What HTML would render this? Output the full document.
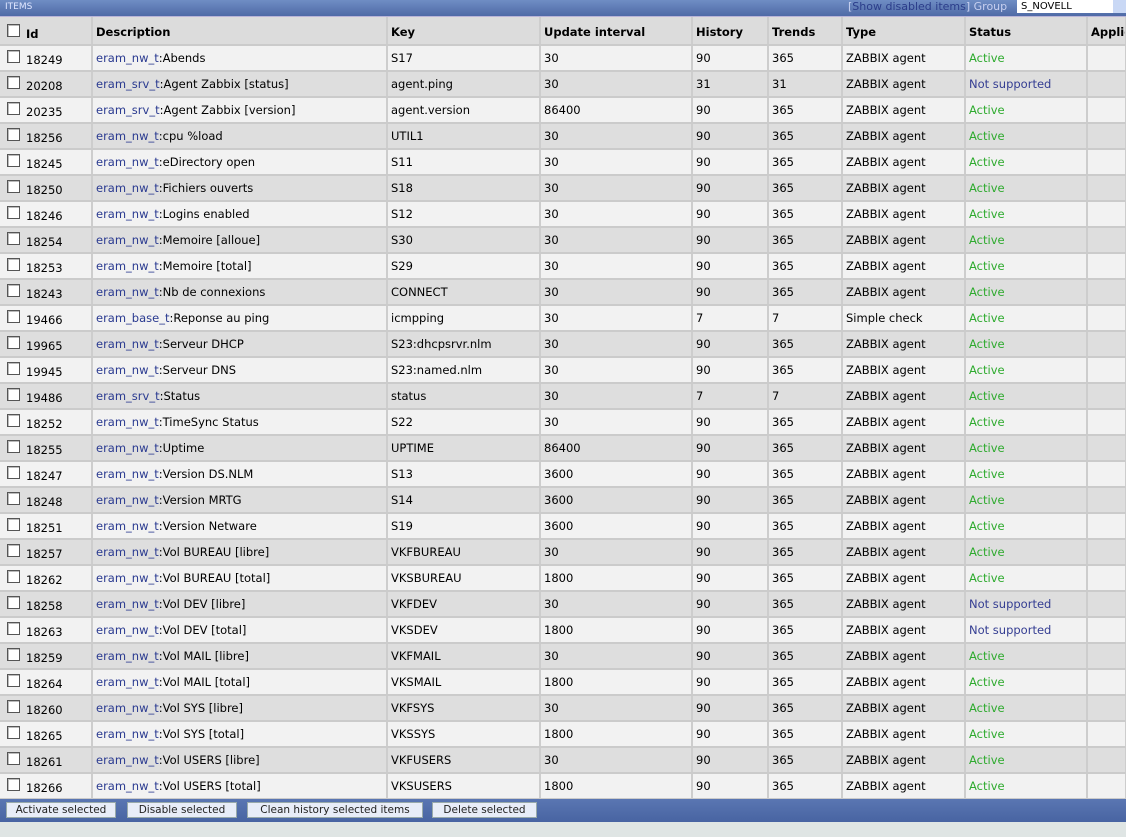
<!DOCTYPE html>
<html><head><meta charset="utf-8"><style>
body{margin:0;width:1126px;height:837px;background:#dfe5e4;font-family:"DejaVu Sans",Verdana,sans-serif;font-size:11.5px;color:#000;overflow:hidden;position:relative}
.top{position:absolute;left:0;top:0;width:1126px;height:16px;background:linear-gradient(#6f8dc4,#4f6aa6);border-bottom:1px solid #b9b4d8}
.top .t{position:absolute;left:5px;top:2px;color:#dfe6ff;font-size:9px}
.top .r{position:absolute;left:848px;top:0px;color:#c8d0f0;font-size:11px}
.top .r a{color:#2b3d8a}
.sel{position:absolute;left:1017px;top:0;width:109px;height:13px;background:#fff;font-size:10px;line-height:13px;text-indent:4px;color:#000}
.sel:after{content:"";position:absolute;right:0;top:0;width:13px;height:13px;background:#c9d8f5}
table{position:absolute;left:0;top:17px;border-collapse:collapse;table-layout:fixed;width:1126px}
td,th{border-right:2px solid #cdcdcd;border-bottom:2px solid #cbcbcb;height:20px;padding:0 0 4px 3px;white-space:nowrap;overflow:hidden;vertical-align:bottom;text-align:left;line-height:16px}
th{height:23px;background:#dcdcdc;font-weight:bold;padding-bottom:4px}
tr:nth-child(even) td{background:#f2f2f2}
tr:nth-child(odd) td{background:#dedede}
.cb{display:inline-block;width:11px;height:11px;border:1px solid #555;background:#fff;vertical-align:-1px;margin:0 6px 0 4px;box-shadow:inset 1px 1px 0 #bbb}
.id{position:relative;top:2px}
a{color:#2a3a90;text-decoration:none}
.g{color:#2daa2d}.n{color:#343d92}
.bar{position:absolute;left:0;top:799px;width:1126px;height:23px;background:linear-gradient(#5a76b2,#4864a2)}
.b{position:absolute;top:3px;height:14px;background:#e8edf8;border:1px solid #9aa;font-size:10.5px;line-height:14px;text-align:center;color:#222}
</style></head><body>
<div class="top"><span class="t">ITEMS</span><span class="r">[<a>Show disabled items</a>] Group</span><div class="sel">S_NOVELL</div></div>
<table>
<colgroup><col style="width:92px"><col style="width:295px"><col style="width:153px"><col style="width:152px"><col style="width:76px"><col style="width:74px"><col style="width:123px"><col style="width:122px"><col style="width:39px"></colgroup>
<tr><th><span class="cb"></span><span class="id">Id</span></th><th>Description</th><th>Key</th><th>Update interval</th><th>History</th><th>Trends</th><th>Type</th><th>Status</th><th>Applications</th></tr>
<tr><td><span class="cb"></span><span class="id">18249</span></td><td><a>eram_nw_t</a>:Abends</td><td>S17</td><td>30</td><td>90</td><td>365</td><td>ZABBIX agent</td><td class="g">Active</td><td></td></tr>
<tr><td><span class="cb"></span><span class="id">20208</span></td><td><a>eram_srv_t</a>:Agent Zabbix [status]</td><td>agent.ping</td><td>30</td><td>31</td><td>31</td><td>ZABBIX agent</td><td class="n">Not supported</td><td></td></tr>
<tr><td><span class="cb"></span><span class="id">20235</span></td><td><a>eram_srv_t</a>:Agent Zabbix [version]</td><td>agent.version</td><td>86400</td><td>90</td><td>365</td><td>ZABBIX agent</td><td class="g">Active</td><td></td></tr>
<tr><td><span class="cb"></span><span class="id">18256</span></td><td><a>eram_nw_t</a>:cpu %load</td><td>UTIL1</td><td>30</td><td>90</td><td>365</td><td>ZABBIX agent</td><td class="g">Active</td><td></td></tr>
<tr><td><span class="cb"></span><span class="id">18245</span></td><td><a>eram_nw_t</a>:eDirectory open</td><td>S11</td><td>30</td><td>90</td><td>365</td><td>ZABBIX agent</td><td class="g">Active</td><td></td></tr>
<tr><td><span class="cb"></span><span class="id">18250</span></td><td><a>eram_nw_t</a>:Fichiers ouverts</td><td>S18</td><td>30</td><td>90</td><td>365</td><td>ZABBIX agent</td><td class="g">Active</td><td></td></tr>
<tr><td><span class="cb"></span><span class="id">18246</span></td><td><a>eram_nw_t</a>:Logins enabled</td><td>S12</td><td>30</td><td>90</td><td>365</td><td>ZABBIX agent</td><td class="g">Active</td><td></td></tr>
<tr><td><span class="cb"></span><span class="id">18254</span></td><td><a>eram_nw_t</a>:Memoire [alloue]</td><td>S30</td><td>30</td><td>90</td><td>365</td><td>ZABBIX agent</td><td class="g">Active</td><td></td></tr>
<tr><td><span class="cb"></span><span class="id">18253</span></td><td><a>eram_nw_t</a>:Memoire [total]</td><td>S29</td><td>30</td><td>90</td><td>365</td><td>ZABBIX agent</td><td class="g">Active</td><td></td></tr>
<tr><td><span class="cb"></span><span class="id">18243</span></td><td><a>eram_nw_t</a>:Nb de connexions</td><td>CONNECT</td><td>30</td><td>90</td><td>365</td><td>ZABBIX agent</td><td class="g">Active</td><td></td></tr>
<tr><td><span class="cb"></span><span class="id">19466</span></td><td><a>eram_base_t</a>:Reponse au ping</td><td>icmpping</td><td>30</td><td>7</td><td>7</td><td>Simple check</td><td class="g">Active</td><td></td></tr>
<tr><td><span class="cb"></span><span class="id">19965</span></td><td><a>eram_nw_t</a>:Serveur DHCP</td><td>S23:dhcpsrvr.nlm</td><td>30</td><td>90</td><td>365</td><td>ZABBIX agent</td><td class="g">Active</td><td></td></tr>
<tr><td><span class="cb"></span><span class="id">19945</span></td><td><a>eram_nw_t</a>:Serveur DNS</td><td>S23:named.nlm</td><td>30</td><td>90</td><td>365</td><td>ZABBIX agent</td><td class="g">Active</td><td></td></tr>
<tr><td><span class="cb"></span><span class="id">19486</span></td><td><a>eram_srv_t</a>:Status</td><td>status</td><td>30</td><td>7</td><td>7</td><td>ZABBIX agent</td><td class="g">Active</td><td></td></tr>
<tr><td><span class="cb"></span><span class="id">18252</span></td><td><a>eram_nw_t</a>:TimeSync Status</td><td>S22</td><td>30</td><td>90</td><td>365</td><td>ZABBIX agent</td><td class="g">Active</td><td></td></tr>
<tr><td><span class="cb"></span><span class="id">18255</span></td><td><a>eram_nw_t</a>:Uptime</td><td>UPTIME</td><td>86400</td><td>90</td><td>365</td><td>ZABBIX agent</td><td class="g">Active</td><td></td></tr>
<tr><td><span class="cb"></span><span class="id">18247</span></td><td><a>eram_nw_t</a>:Version DS.NLM</td><td>S13</td><td>3600</td><td>90</td><td>365</td><td>ZABBIX agent</td><td class="g">Active</td><td></td></tr>
<tr><td><span class="cb"></span><span class="id">18248</span></td><td><a>eram_nw_t</a>:Version MRTG</td><td>S14</td><td>3600</td><td>90</td><td>365</td><td>ZABBIX agent</td><td class="g">Active</td><td></td></tr>
<tr><td><span class="cb"></span><span class="id">18251</span></td><td><a>eram_nw_t</a>:Version Netware</td><td>S19</td><td>3600</td><td>90</td><td>365</td><td>ZABBIX agent</td><td class="g">Active</td><td></td></tr>
<tr><td><span class="cb"></span><span class="id">18257</span></td><td><a>eram_nw_t</a>:Vol BUREAU [libre]</td><td>VKFBUREAU</td><td>30</td><td>90</td><td>365</td><td>ZABBIX agent</td><td class="g">Active</td><td></td></tr>
<tr><td><span class="cb"></span><span class="id">18262</span></td><td><a>eram_nw_t</a>:Vol BUREAU [total]</td><td>VKSBUREAU</td><td>1800</td><td>90</td><td>365</td><td>ZABBIX agent</td><td class="g">Active</td><td></td></tr>
<tr><td><span class="cb"></span><span class="id">18258</span></td><td><a>eram_nw_t</a>:Vol DEV [libre]</td><td>VKFDEV</td><td>30</td><td>90</td><td>365</td><td>ZABBIX agent</td><td class="n">Not supported</td><td></td></tr>
<tr><td><span class="cb"></span><span class="id">18263</span></td><td><a>eram_nw_t</a>:Vol DEV [total]</td><td>VKSDEV</td><td>1800</td><td>90</td><td>365</td><td>ZABBIX agent</td><td class="n">Not supported</td><td></td></tr>
<tr><td><span class="cb"></span><span class="id">18259</span></td><td><a>eram_nw_t</a>:Vol MAIL [libre]</td><td>VKFMAIL</td><td>30</td><td>90</td><td>365</td><td>ZABBIX agent</td><td class="g">Active</td><td></td></tr>
<tr><td><span class="cb"></span><span class="id">18264</span></td><td><a>eram_nw_t</a>:Vol MAIL [total]</td><td>VKSMAIL</td><td>1800</td><td>90</td><td>365</td><td>ZABBIX agent</td><td class="g">Active</td><td></td></tr>
<tr><td><span class="cb"></span><span class="id">18260</span></td><td><a>eram_nw_t</a>:Vol SYS [libre]</td><td>VKFSYS</td><td>30</td><td>90</td><td>365</td><td>ZABBIX agent</td><td class="g">Active</td><td></td></tr>
<tr><td><span class="cb"></span><span class="id">18265</span></td><td><a>eram_nw_t</a>:Vol SYS [total]</td><td>VKSSYS</td><td>1800</td><td>90</td><td>365</td><td>ZABBIX agent</td><td class="g">Active</td><td></td></tr>
<tr><td><span class="cb"></span><span class="id">18261</span></td><td><a>eram_nw_t</a>:Vol USERS [libre]</td><td>VKFUSERS</td><td>30</td><td>90</td><td>365</td><td>ZABBIX agent</td><td class="g">Active</td><td></td></tr>
<tr><td><span class="cb"></span><span class="id">18266</span></td><td><a>eram_nw_t</a>:Vol USERS [total]</td><td>VKSUSERS</td><td>1800</td><td>90</td><td>365</td><td>ZABBIX agent</td><td class="g">Active</td><td></td></tr>
</table>
<div class="bar">
<div class="b" style="left:6px;width:108px">Activate selected</div>
<div class="b" style="left:127px;width:108px">Disable selected</div>
<div class="b" style="left:247px;width:174px">Clean history selected items</div>
<div class="b" style="left:432px;width:103px">Delete selected</div>
</div>
</body></html>
